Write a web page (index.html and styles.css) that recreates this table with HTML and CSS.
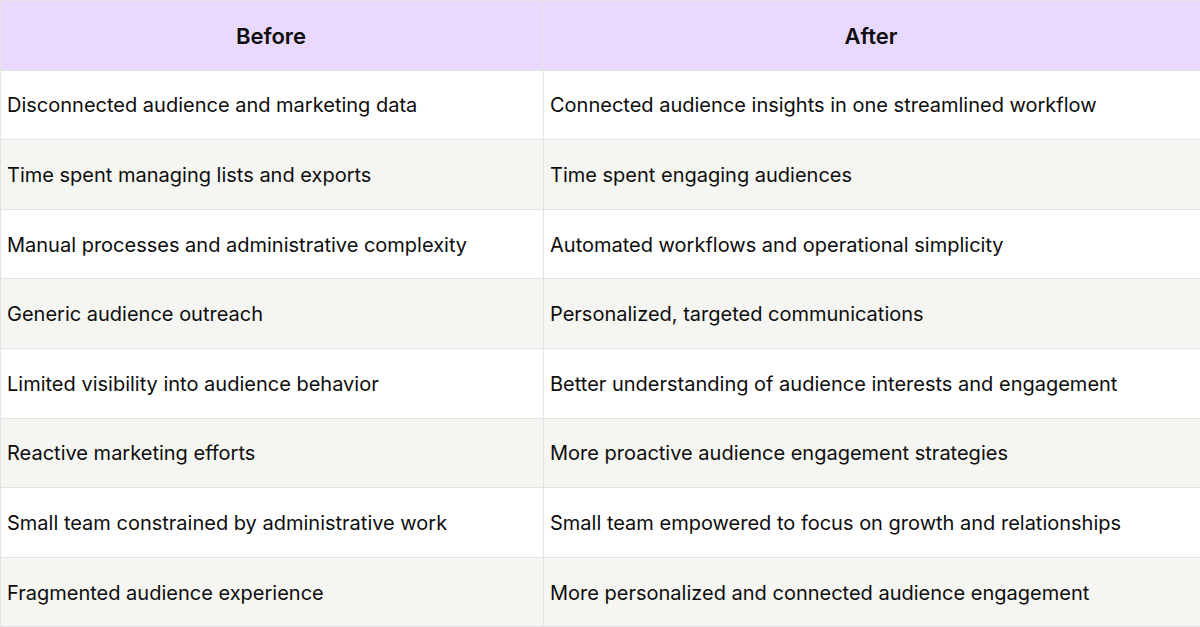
FILE: index.html
```html
<!DOCTYPE html>
<html>
<head>
<meta charset="utf-8">
<link rel="stylesheet" href="styles.css">
</head>
<body>
<table class="compare">
  <colgroup><col class="col-before"><col class="col-after"></colgroup>
  <thead>
    <tr><th>Before</th><th>After</th></tr>
  </thead>
  <tbody>
    <tr><td>Disconnected audience and marketing data</td><td>Connected audience insights in one streamlined workflow</td></tr>
    <tr><td>Time spent managing lists and exports</td><td>Time spent engaging audiences</td></tr>
    <tr><td>Manual processes and administrative complexity</td><td>Automated workflows and operational simplicity</td></tr>
    <tr><td>Generic audience outreach</td><td>Personalized, targeted communications</td></tr>
    <tr><td>Limited visibility into audience behavior</td><td>Better understanding of audience interests and engagement</td></tr>
    <tr><td>Reactive marketing efforts</td><td>More proactive audience engagement strategies</td></tr>
    <tr><td>Small team constrained by administrative work</td><td>Small team empowered to focus on growth and relationships</td></tr>
    <tr><td>Fragmented audience experience</td><td>More personalized and connected audience engagement</td></tr>
  </tbody>
</table>
</body>
</html>
```

FILE: styles.css
```css
html, body {
  margin: 0;
  padding: 0;
  background: #ffffff;
}
.compare {
  width: 1200px;
  border-collapse: collapse;
  table-layout: fixed;
  font-family: Inter, "Noto Sans", sans-serif;
  color: #0d0d0d;
}
.col-before { width: 543px; }
.col-after { width: 657px; }
.compare th,
.compare td {
  border: 1px solid #e3e3e3;
  height: 69.6px;
  padding: 1px 8px 0 6px;
  box-sizing: border-box;
  vertical-align: middle;
  white-space: nowrap;
}
.compare th {
  background: #ead9fe;
  font-size: 22px;
  font-weight: 600;
  text-align: center;
}
.compare td {
  font-size: 20px;
  font-weight: 400;
  text-align: left;
}
.compare tbody tr:nth-child(even) td {
  background: #f5f5f1;
}
```
